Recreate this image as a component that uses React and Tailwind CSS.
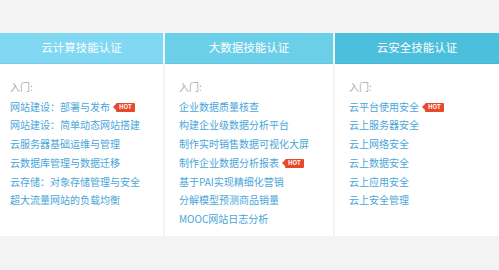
const columns = [
  {
    title: "云计算技能认证",
    head: "bg-[#80d8f3]",
    width: "w-[163px]",
    pad: "pl-[10px]",
    links: [
      { text: "网站建设：部署与发布", hot: true },
      { text: "网站建设：简单动态网站搭建" },
      { text: "云服务器基础运维与管理" },
      { text: "云数据库管理与数据迁移" },
      { text: "云存储：对象存储管理与安全" },
      { text: "超大流量网站的负载均衡" },
    ],
  },
  {
    title: "大数据技能认证",
    head: "bg-[#6ccfe9]",
    width: "w-[168px]",
    pad: "pl-[14px]",
    links: [
      { text: "企业数据质量核查" },
      { text: "构建企业级数据分析平台" },
      { text: "制作实时销售数据可视化大屏" },
      { text: "制作企业数据分析报表", hot: true },
      { text: "基于PAI实现精细化营销" },
      { text: "分解模型预测商品销量" },
      { text: "MOOC网站日志分析" },
    ],
  },
  {
    title: "云安全技能认证",
    head: "bg-[#4bbfdc]",
    width: "flex-1",
    pad: "pl-[14px]",
    links: [
      { text: "云平台使用安全", hot: true },
      { text: "云上服务器安全" },
      { text: "云上网络安全" },
      { text: "云上数据安全" },
      { text: "云上应用安全" },
      { text: "云上安全管理" },
    ],
  },
]

function Hot() {
  // petit badge rouge avec une flèche à gauche
  return (
    <span className="relative ml-[6px] inline-flex h-[9px] items-center rounded-[1px] bg-[#e8482c] px-[3px] text-[6px] font-bold leading-none text-white">
      <span className="absolute left-[-3px] top-[1.5px] h-0 w-0 border-y-[3px] border-r-[3px] border-y-transparent border-r-[#e8482c]" />
      HOT
    </span>
  )
}

export default function App() {
  return (
    <div
      className="h-[270px] w-[499px] overflow-hidden bg-[#f3f3f3] pt-[33px]"
      style={{ fontFamily: '"Noto Sans CJK SC", "Noto Sans", sans-serif' }}
    >
      <div className="flex gap-[2px]">
        {columns.map((col) => (
          <div key={col.title} className={`${col.width} flex flex-col`}>
            <div
              className={`${col.head} flex h-[31px] items-center justify-center border-b border-black/5 text-[11.5px] text-white`}
            >
              {col.title}
            </div>
            <div className={`h-[172px] bg-white ${col.pad} pt-[14px]`}>
              <div className="text-[10px] leading-[18.7px] text-[#a9a9a9]">入门:</div>
              <ul className="mt-[1px]">
                {col.links.map((l) => (
                  <li
                    key={l.text}
                    className="flex items-center text-[10px] leading-[18.7px] text-[#4aa6d8]"
                  >
                    {l.text}
                    {l.hot && <Hot />}
                  </li>
                ))}
              </ul>
            </div>
          </div>
        ))}
      </div>
    </div>
  )
}
